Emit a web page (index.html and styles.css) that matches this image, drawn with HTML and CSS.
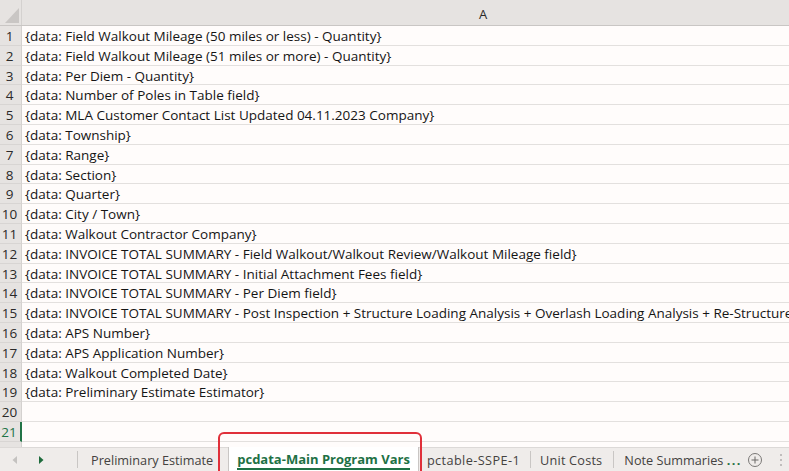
FILE: index.html
```html
<!DOCTYPE html>
<html>
<head>
<meta charset="utf-8">
<link rel="stylesheet" href="styles.css">
</head>
<body>
<div class="app">
  <div class="sheet">
    <div class="hdr">
      <div class="corner"><svg width="22" height="25" viewBox="0 0 22 25"><polygon points="19,8 19,23 5,23" fill="#c9c6c4"/></svg></div>
      <div class="colA">A</div>
    </div>
    <div class="row"><div class="rn">1</div><div class="cell">{data: Field Walkout Mileage (50 miles or less) - Quantity}</div></div>
    <div class="row"><div class="rn">2</div><div class="cell">{data: Field Walkout Mileage (51 miles or more) - Quantity}</div></div>
    <div class="row"><div class="rn">3</div><div class="cell">{data: Per Diem - Quantity}</div></div>
    <div class="row"><div class="rn">4</div><div class="cell">{data: Number of Poles in Table field}</div></div>
    <div class="row"><div class="rn">5</div><div class="cell">{data: MLA Customer Contact List Updated 04.11.2023 Company}</div></div>
    <div class="row"><div class="rn">6</div><div class="cell">{data: Township}</div></div>
    <div class="row"><div class="rn">7</div><div class="cell">{data: Range}</div></div>
    <div class="row"><div class="rn">8</div><div class="cell">{data: Section}</div></div>
    <div class="row"><div class="rn">9</div><div class="cell">{data: Quarter}</div></div>
    <div class="row"><div class="rn">10</div><div class="cell">{data: City / Town}</div></div>
    <div class="row"><div class="rn">11</div><div class="cell">{data: Walkout Contractor Company}</div></div>
    <div class="row"><div class="rn">12</div><div class="cell">{data: INVOICE TOTAL SUMMARY - Field Walkout/Walkout Review/Walkout Mileage field}</div></div>
    <div class="row"><div class="rn">13</div><div class="cell">{data: INVOICE TOTAL SUMMARY - Initial Attachment Fees field}</div></div>
    <div class="row"><div class="rn">14</div><div class="cell">{data: INVOICE TOTAL SUMMARY - Per Diem field}</div></div>
    <div class="row"><div class="rn">15</div><div class="cell">{data: INVOICE TOTAL SUMMARY - Post Inspection + Structure Loading Analysis + Overlash Loading Analysis + Re-Structure Loading Analysis field}</div></div>
    <div class="row"><div class="rn">16</div><div class="cell">{data: APS Number}</div></div>
    <div class="row"><div class="rn">17</div><div class="cell">{data: APS Application Number}</div></div>
    <div class="row"><div class="rn">18</div><div class="cell">{data: Walkout Completed Date}</div></div>
    <div class="row"><div class="rn">19</div><div class="cell">{data: Preliminary Estimate Estimator}</div></div>
    <div class="row"><div class="rn">20</div><div class="cell"></div></div>
    <div class="row sel"><div class="rn">21</div><div class="cell"></div></div>
    <div class="row"><div class="rn">22</div><div class="cell"></div></div>
  </div>
  <div class="tabbar">
    <div class="nav">
      <svg class="arr" width="8" height="10" viewBox="0 0 8 10"><polygon points="6,1 6,9 1.5,5" fill="#c4c2c0"/></svg>
      <svg class="arr" width="8" height="10" viewBox="0 0 8 10"><polygon points="2,1 2,9 6.5,5" fill="#1e6b3c"/></svg>
    </div>
    <div class="tab first">Preliminary Estimate</div>
    <div class="tab active"><span>pcdata-Main Program Vars</span></div>
    <div class="tab pct">pctable-SSPE-1</div>
    <div class="tab sep unit">Unit Costs</div>
    <div class="tab sep last">Note Summaries&nbsp;<b class="more">...</b></div>
    <div class="plus"><svg width="16" height="16" viewBox="0 0 16 16"><circle cx="8" cy="8" r="6.5" fill="none" stroke="#7a7876" stroke-width="1"/><path d="M8 4.5v7M4.5 8h7" stroke="#6a6866" stroke-width="1"/></svg></div>
    <div class="dots"><svg width="4" height="14" viewBox="0 0 4 14"><circle cx="2" cy="2" r="1" fill="#b0aeac"/><circle cx="2" cy="7" r="1" fill="#b0aeac"/><circle cx="2" cy="12" r="1" fill="#b0aeac"/></svg></div>
  </div>
  <div class="mark"></div>
</div>
</body>
</html>
```
FILE: styles.css
```css
html, body {
  margin: 0;
  padding: 0;
  width: 789px;
  height: 471px;
  overflow: hidden;
  background: #fffcfb;
}
.app {
  position: relative;
  width: 789px;
  height: 471px;
  display: flex;
  flex-direction: column;
  overflow: hidden;
  font-family: "Open Sans", "Noto Sans", sans-serif;
}
.sheet {
  flex: 1;
  overflow: hidden;
  display: flex;
  flex-direction: column;
}
.hdr {
  display: flex;
  height: 26px;
  flex: none;
  background: #e6e3e1;
  border-bottom: 1px solid #c9c6c4;
  box-sizing: border-box;
}
.corner {
  width: 22px;
  flex: none;
  border-right: 1px solid #d4d1cf;
  box-sizing: border-box;
}
.corner svg { display: block; }
.colA {
  width: 922px;
  flex: none;
  text-align: center;
  font-size: 13px;
  line-height: 28px;
  color: #2b2a29;
}
.row {
  display: flex;
  height: 19.8px;
  flex: none;
}
.rn {
  width: 22px;
  flex: none;
  box-sizing: border-box;
  background: #e6e3e1;
  border-right: 1px solid #d4d1cf;
  border-bottom: 1px solid #d8d5d3;
  text-align: center;
  padding-right: 2px;
  font-size: 13.5px;
  line-height: 20px;
  color: #2b2a29;
}
.cell {
  flex: 1;
  box-sizing: border-box;
  border-bottom: 1px solid #e3e0de;
  padding-left: 3px;
  font-size: 13.5px;
  line-height: 20px;
  color: #151515;
  white-space: nowrap;
  overflow: hidden;
}
.row.sel .rn {
  color: #217346;
  border-right: 2px solid #217346;
}
.tabbar {
  flex: none;
  height: 24px;
  display: flex;
  align-items: stretch;
  background: #efecea;
  border-top: 1px solid #dcd9d7;
  box-sizing: border-box;
  font-family: "Open Sans", "Noto Sans", sans-serif;
  font-size: 12.7px;
  color: #444240;
}
.nav {
  width: 78px;
  flex: none;
  display: flex;
  align-items: center;
  gap: 18px;
  padding-left: 11px;
  box-sizing: border-box;
  border-right: 1px solid #c9c6c4;
  margin: 3px 0;
}
.arr { display: block; }
.tab {
  display: flex;
  align-items: center;
  padding: 0 10px;
  white-space: nowrap;
  flex: none;
}
.tab.first { padding: 0 15px 0 13px; }
.tab.pct { padding: 0 10px 0 8px; letter-spacing: 0.4px; }
.tab.sep { border-left: 1px solid #c9c6c4; margin: 3px 0; }
.tab.unit { padding: 0 11px 0 9px; letter-spacing: 0.2px; }
.tab.last { padding: 0 5px 0 10px; }
.tab.active {
  background: #ffffff;
  color: #1e7145;
  font-weight: 700;
  font-size: 13px;
  border-left: 1px solid #c9c6c4;
  border-right: 1px solid #c9c6c4;
  padding: 0 8px;
  margin-top: -1px;
}
.tab.active span {
  border-bottom: 2px solid #1e7145;
  line-height: 18px;
  margin-top: 2px;
}
.more { color: #1e7145; font-weight: 700; letter-spacing: 1.5px; }
.plus {
  display: flex;
  align-items: center;
  flex: none;
}
.plus svg { display: block; }
.dots {
  display: flex;
  align-items: center;
  padding-left: 16px;
  flex: none;
}
.mark {
  position: absolute;
  left: 218px;
  top: 432px;
  width: 204px;
  height: 50px;
  border: 2px solid #e0303a;
  border-radius: 6px;
  box-sizing: border-box;
}
```
